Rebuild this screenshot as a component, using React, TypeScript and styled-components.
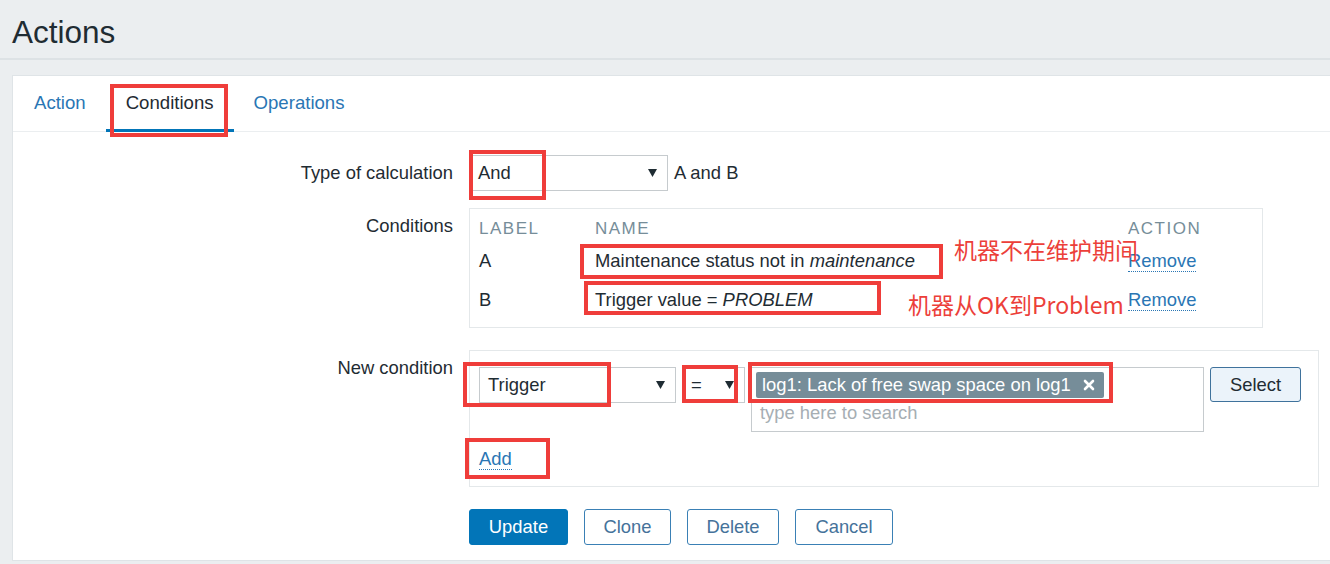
import React from "react";
import styled, { createGlobalStyle } from "styled-components";

const GlobalStyle = createGlobalStyle`
  html, body {
    margin: 0;
    padding: 0;
  }
  body {
    background: #ebeef0;
    font-family: "Liberation Sans", Arial, sans-serif;
    color: #1f2c33;
    overflow: hidden;
  }
`;

const LINK = "#2a76b4";
const FS = "18.4px";

const Page = styled.div`
  width: 1330px;
  height: 564px;
  overflow: hidden;
`;

const Title = styled.h1`
  margin: 0;
  padding: 14px 12px 8px;
  font-size: 31.5px;
  line-height: 36px;
  font-weight: normal;
  color: #1f2c33;
  border-bottom: 2px solid #dde2e5;
`;

const Panel = styled.div`
  margin: 15px -20px 0 12px;
  background: #fff;
  border: 1px solid #dfe4e7;
  padding-bottom: 15px;
`;

const TabBar = styled.div`
  display: flex;
  height: 55px;
  padding-left: 1px;
  border-bottom: 1px solid #ebeef0;
`;

const Tab = styled.div<{ $active?: boolean }>`
  position: relative;
  display: flex;
  align-items: center;
  box-sizing: border-box;
  height: 56px;
  margin-bottom: -1px;
  padding: 0 20px;
  font-size: 18.6px;
  color: ${(p) => (p.$active ? "#1f2c33" : LINK)};
  border-bottom: 3px solid ${(p) => (p.$active ? "#0275b8" : "transparent")};
`;

// red annotation frames drawn over the form
const Mark = styled.div<{ $x: number; $y: number; $w: number; $h: number }>`
  position: absolute;
  left: ${(p) => p.$x}px;
  top: ${(p) => p.$y}px;
  width: ${(p) => p.$w}px;
  height: ${(p) => p.$h}px;
  box-sizing: border-box;
  border: 4px solid #ef3d3a;
  pointer-events: none;
`;

const Note = styled.div<{ $x: number; $y: number }>`
  position: absolute;
  left: ${(p) => p.$x}px;
  top: ${(p) => p.$y}px;
  font-family: "Noto Sans CJK SC", "Liberation Sans", sans-serif;
  font-size: 23px;
  line-height: 28px;
  color: #ec3f3a;
  white-space: nowrap;
`;

const Form = styled.div`
  display: flex;
  flex-direction: column;
  padding-top: 23px;
`;

const Row = styled.div<{ $mt?: number }>`
  display: grid;
  grid-template-columns: 440px 1fr;
  column-gap: 16px;
  align-items: start;
  margin-top: ${(p) => p.$mt ?? 0}px;
`;

const Label = styled.div`
  text-align: right;
  font-size: ${FS};
  line-height: 35px;
  color: #1f2c33;
`;

const Inline = styled.div`
  display: flex;
  align-items: center;
  font-size: ${FS};
`;

const Select = styled.div<{ $w: number; $ml?: number }>`
  position: relative;
  display: flex;
  align-items: center;
  justify-content: space-between;
  flex-shrink: 0;
  box-sizing: border-box;
  width: ${(p) => p.$w}px;
  height: 36px;
  margin-left: ${(p) => p.$ml ?? 0}px;
  padding: 0 10px 0 8px;
  border: 1px solid #c6cbce;
  background: #fff;
  font-size: ${FS};
  color: #1f2c33;
`;

const Hint = styled.span`
  margin-left: 6px;
`;

const Arrow = () => (
  <svg width="9" height="8" viewBox="0 0 9 8">
    <path d="M0 0 H9 L4.5 8 Z" fill="#1f2c33" />
  </svg>
);

const CondBox = styled.div`
  position: relative;
  display: grid;
  grid-template-columns: 116px 533px 1fr;
  grid-template-rows: 24px 39px 39px;
  width: 794px;
  box-sizing: border-box;
  padding: 8px 9px 8px;
  border: 1px solid #e4e8ea;
  font-size: ${FS};
`;

const Head = styled.div`
  font-size: 17px;
  line-height: 24px;
  letter-spacing: 1.5px;
  color: #768d99;
`;

const Cell = styled.div`
  line-height: 39px;
  white-space: nowrap;
`;

const Link = styled.span`
  color: ${LINK};
  border-bottom: 1px dotted ${LINK};
`;

const NewBox = styled.div`
  position: relative;
  width: 850px;
  box-sizing: border-box;
  padding: 16px 9px;
  border: 1px solid #e4e8ea;
`;

const ControlLine = styled.div`
  display: flex;
  align-items: flex-start;
`;

const MultiSelect = styled.div`
  flex-shrink: 0;
  width: 453px;
  height: 65px;
  box-sizing: border-box;
  margin-left: 6px;
  padding: 4px;
  border: 1px solid #c6cbce;
`;

const Tag = styled.span`
  display: inline-flex;
  align-items: center;
  gap: 12px;
  height: 26px;
  padding: 0 9px 0 6px;
  border-radius: 2px;
  background: #768d99;
  color: #fff;
  font-size: ${FS};
  white-space: nowrap;
`;

const Placeholder = styled.div`
  padding-left: 4px;
  line-height: 30px;
  font-size: ${FS};
  color: #a6aeb3;
`;

const PickButton = styled.button`
  flex-shrink: 0;
  width: 91px;
  height: 35px;
  margin-left: 6px;
  border: 1px solid #3f729c;
  border-radius: 3px;
  background: #ebf3fa;
  font-family: inherit;
  font-size: ${FS};
  color: #1f2c33;
`;

const AddLink = styled(Link)`
  display: inline-block;
  margin-top: 16px;
  font-size: ${FS};
  line-height: 21px;
`;

const Buttons = styled.div`
  display: flex;
  gap: 16px;
`;

const Button = styled.button<{ $primary?: boolean; $w: number }>`
  width: ${(p) => p.$w}px;
  height: 36px;
  padding: 0;
  border-radius: 3px;
  border: 1px solid ${(p) => (p.$primary ? "#0275b8" : "#3a80b5")};
  background: ${(p) => (p.$primary ? "#0275b8" : "#fff")};
  color: ${(p) => (p.$primary ? "#fff" : "#45729a")};
  font-family: inherit;
  font-size: ${FS};
`;

const Close = () => (
  <svg width="12" height="12" viewBox="0 0 12 12">
    <path d="M2 2 L10 10 M10 2 L2 10" stroke="#fff" strokeWidth="2.6" strokeLinecap="round" />
  </svg>
);

export default function App() {
  return (
    <Page>
      <GlobalStyle />
      <Title>Actions</Title>
      <Panel>
        <TabBar>
          <Tab>Action</Tab>
          <Tab $active>
            Conditions
            <Mark $x={4} $y={8} $w={118} $h={53} />
          </Tab>
          <Tab>Operations</Tab>
        </TabBar>

        <Form>
          <Row>
            <Label>Type of calculation</Label>
            <Inline>
              <Select $w={199}>
                And
                <Arrow />
                <Mark $x={-1} $y={-6} $w={77} $h={50} />
              </Select>
              <Hint>A and B</Hint>
            </Inline>
          </Row>

          <Row $mt={17}>
            <Label>Conditions</Label>
            <CondBox>
              <Head>LABEL</Head>
              <Head>NAME</Head>
              <Head>ACTION</Head>
              <Cell>A</Cell>
              <Cell>
                Maintenance status not in <em>maintenance</em>
              </Cell>
              <Cell>
                <Link>Remove</Link>
              </Cell>
              <Cell>B</Cell>
              <Cell>
                Trigger value = <em>PROBLEM</em>
              </Cell>
              <Cell>
                <Link>Remove</Link>
              </Cell>
              <Mark $x={110} $y={35} $w={363} $h={35} />
              <Mark $x={114} $y={72} $w={297} $h={34} />
              <Note $x={484} $y={26}>机器不在维护期间</Note>
              <Note $x={438} $y={81}>机器从OK到Problem</Note>
            </CondBox>
          </Row>

          <Row $mt={22}>
            <Label>New condition</Label>
            <NewBox>
              <ControlLine>
                <Select $w={197}>
                  Trigger
                  <Arrow />
                </Select>
                <Select $w={63} $ml={6}>
                  =
                  <Arrow />
                </Select>
                <MultiSelect>
                  <Tag>
                    log1: Lack of free swap space on log1
                    <Close />
                  </Tag>
                  <Placeholder>type here to search</Placeholder>
                </MultiSelect>
                <PickButton>Select</PickButton>
              </ControlLine>
              <AddLink>Add</AddLink>
              <Mark $x={-7} $y={11} $w={148} $h={45} />
              <Mark $x={212} $y={14} $w={56} $h={38} />
              <Mark $x={278} $y={11} $w={365} $h={41} />
              <Mark $x={-5} $y={87} $w={85} $h={41} />
            </NewBox>
          </Row>

          <Row $mt={22}>
            <div />
            <Buttons>
              <Button $primary $w={99}>Update</Button>
              <Button $w={87}>Clone</Button>
              <Button $w={92}>Delete</Button>
              <Button $w={98}>Cancel</Button>
            </Buttons>
          </Row>
        </Form>
      </Panel>
    </Page>
  );
}
